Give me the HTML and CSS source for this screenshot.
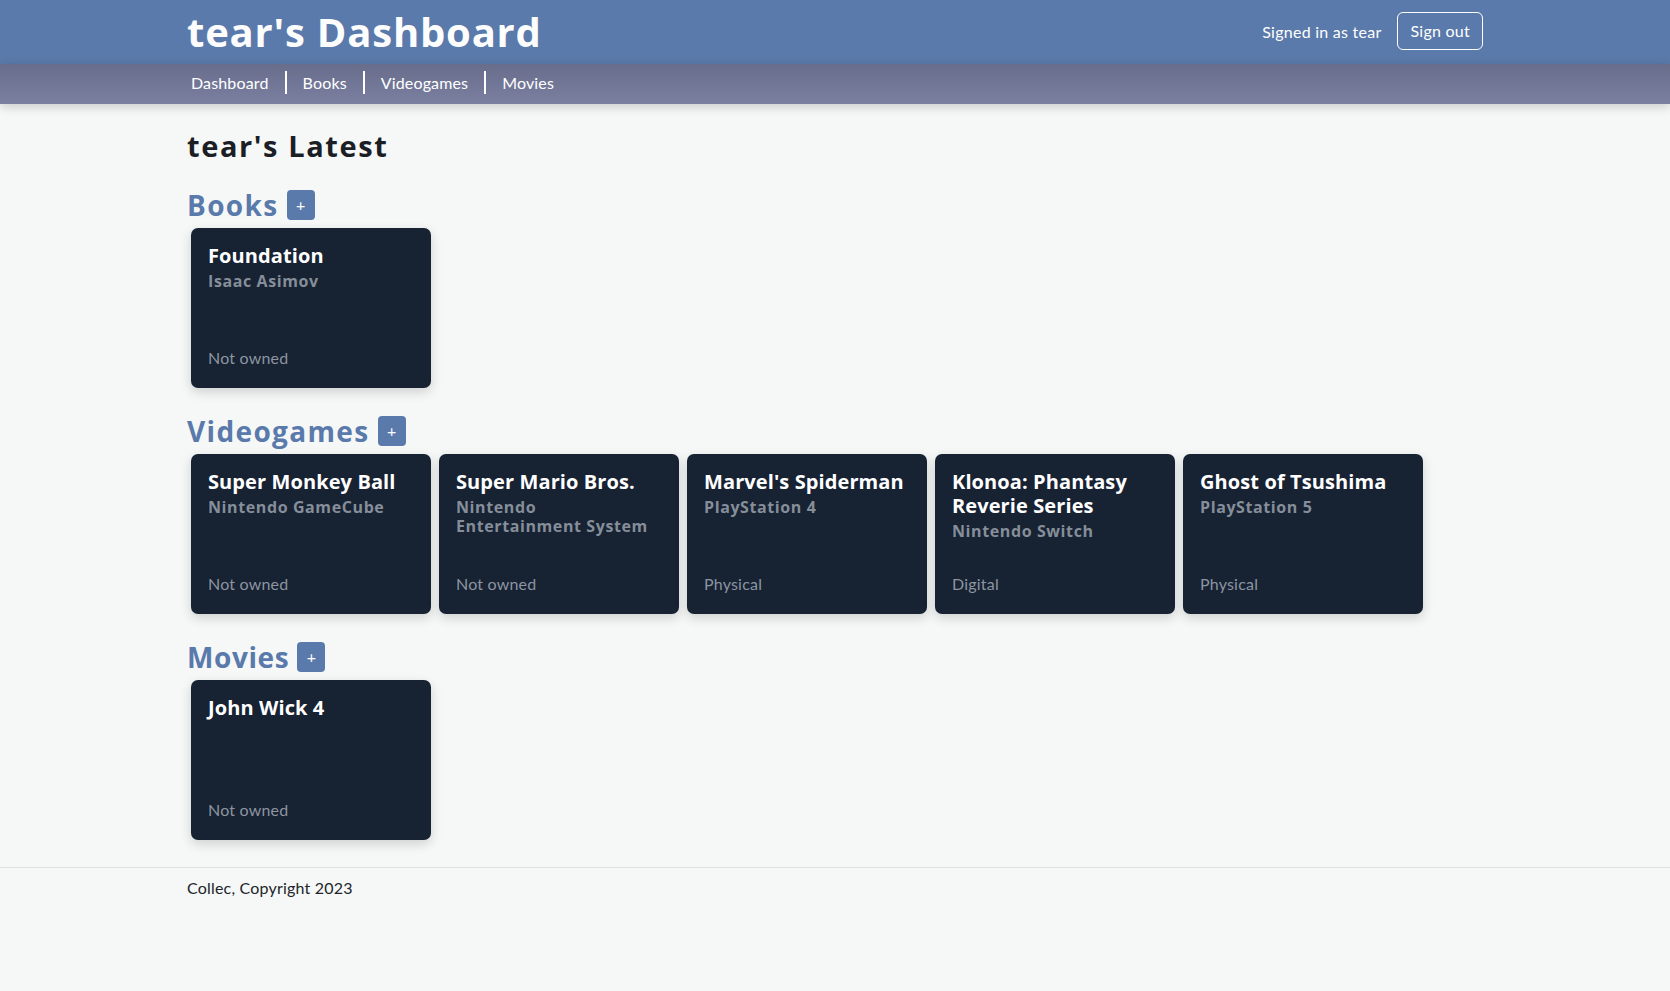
FILE: index.html
```html
<!DOCTYPE html>
<html lang="en">
<head>
<meta charset="utf-8">
<title>tear's Dashboard</title>
<link rel="stylesheet" href="styles.css">
</head>
<body>
<header class="topbar">
  <div class="container topbar-inner">
    <h1 class="brand">tear's Dashboard</h1>
    <div class="user">
      <span class="signed">Signed in as tear</span>
      <button class="signout">Sign out</button>
    </div>
  </div>
</header>
<nav class="navbar">
  <div class="container nav-inner">
    <a class="nav-link first" href="#">Dashboard</a>
    <a class="nav-link" href="#">Books</a>
    <a class="nav-link" href="#">Videogames</a>
    <a class="nav-link" href="#">Movies</a>
  </div>
</nav>
<main class="container main">
  <h2 class="latest">tear's Latest</h2>

  <section class="section first-section">
    <div class="section-head">
      <h3 class="section-title">Books</h3>
      <button class="add">+</button>
    </div>
    <div class="cards">
      <div class="card">
        <div class="card-title">Foundation</div>
        <div class="card-sub">Isaac Asimov</div>
        <div class="card-status">Not owned</div>
      </div>
    </div>
  </section>

  <section class="section">
    <div class="section-head">
      <h3 class="section-title">Videogames</h3>
      <button class="add">+</button>
    </div>
    <div class="cards">
      <div class="card">
        <div class="card-title">Super Monkey Ball</div>
        <div class="card-sub">Nintendo GameCube</div>
        <div class="card-status">Not owned</div>
      </div>
      <div class="card">
        <div class="card-title">Super Mario Bros.</div>
        <div class="card-sub">Nintendo<br>Entertainment System</div>
        <div class="card-status">Not owned</div>
      </div>
      <div class="card">
        <div class="card-title">Marvel's Spiderman</div>
        <div class="card-sub">PlayStation 4</div>
        <div class="card-status">Physical</div>
      </div>
      <div class="card">
        <div class="card-title">Klonoa: Phantasy<br>Reverie Series</div>
        <div class="card-sub">Nintendo Switch</div>
        <div class="card-status">Digital</div>
      </div>
      <div class="card">
        <div class="card-title">Ghost of Tsushima</div>
        <div class="card-sub">PlayStation 5</div>
        <div class="card-status">Physical</div>
      </div>
    </div>
  </section>

  <section class="section">
    <div class="section-head">
      <h3 class="section-title movies-title">Movies</h3>
      <button class="add">+</button>
    </div>
    <div class="cards">
      <div class="card">
        <div class="card-title">John Wick 4</div>
        <div class="card-status">Not owned</div>
      </div>
    </div>
  </section>
</main>
<footer class="footer">
  <div class="container">Collec, Copyright 2023</div>
</footer>
</body>
</html>
```

FILE: styles.css
```css
* { box-sizing: border-box; }

html, body {
  margin: 0;
  padding: 0;
}

body {
  background: #f6f8f8;
  font-family: "Lato", "Liberation Sans", sans-serif;
  font-size: 16px;
  color: #212529;
  min-height: 991px;
}

.container {
  max-width: 1320px;
  margin: 0 auto;
  padding: 0 12px;
}

.topbar {
  background: #5a7aab;
  height: 64px;
}

.topbar-inner {
  height: 64px;
  display: flex;
  align-items: center;
  justify-content: space-between;
}

.brand {
  margin: 0;
  font-family: "Open Sans", "DejaVu Sans", sans-serif;
  font-weight: 700;
  font-size: 40px;
  line-height: 48px;
  color: #fdfdfd;
  letter-spacing: 0.8px;
}

.user {
  display: flex;
  align-items: center;
  gap: 16px;
  color: #fff;
  padding-bottom: 2px;
}

.signed {
  letter-spacing: 0.25px;
}

.signout {
  font-family: "Lato", "Liberation Sans", sans-serif;
  font-size: 16px;
  line-height: 24px;
  letter-spacing: 0.25px;
  color: #fff;
  background: transparent;
  border: 1px solid #fff;
  border-radius: 6px;
  padding: 6px 12px;
}

.navbar {
  height: 40px;
  background: linear-gradient(#686d8c, #7b80a0);
  box-shadow: 0 3px 10px rgba(0, 0, 0, 0.18);
  position: relative;
}

.nav-inner {
  height: 40px;
  display: flex;
  align-items: center;
  padding-bottom: 3px;
}

.nav-link {
  color: #fff;
  text-decoration: none;
  padding: 0 16px;
  line-height: 23px;
  letter-spacing: 0.15px;
  border-left: 2px solid #fff;
}

.nav-link.first {
  border-left: none;
  padding-left: 4px;
}

.main {
  padding-top: 24px;
}

.latest {
  margin: 0;
  font-family: "Open Sans", "DejaVu Sans", sans-serif;
  font-weight: 700;
  font-size: 29px;
  line-height: 36px;
  letter-spacing: 1.6px;
  color: #1b1f25;
}

.section {
  margin-top: 22px;
}

.first-section {
  margin-top: 24px;
}

.section-head {
  display: flex;
  align-items: center;
  gap: 8px;
  height: 34px;
}

.section-title {
  margin: 0;
  font-family: "Open Sans", "DejaVu Sans", sans-serif;
  font-weight: 700;
  font-size: 28px;
  line-height: 34px;
  letter-spacing: 1.35px;
  color: #5a7aab;
}

.movies-title {
  letter-spacing: 0.6px;
}

.add {
  width: 28px;
  height: 30px;
  padding: 0;
  border: none;
  border-radius: 4px;
  background: #5a7aab;
  color: #fff;
  font-family: "Lato", sans-serif;
  font-size: 16px;
  line-height: 30px;
}

.cards {
  display: flex;
  flex-wrap: wrap;
  margin-top: 2px;
}

.card {
  width: 240px;
  height: 160px;
  margin: 4px;
  padding: 16px 16px 18px 17px;
  background: #172233;
  border-radius: 7px;
  box-shadow: 0 4px 12px rgba(0, 0, 0, 0.16);
  display: flex;
  flex-direction: column;
}

.card-title {
  font-family: "Open Sans", "DejaVu Sans", sans-serif;
  font-weight: 700;
  font-size: 20px;
  line-height: 24px;
  letter-spacing: 0.1px;
  color: #ffffff;
}

.card-sub {
  margin-top: 4px;
  font-family: "Open Sans", "DejaVu Sans", sans-serif;
  font-weight: 700;
  font-size: 16px;
  line-height: 19px;
  letter-spacing: 0.6px;
  color: #858e99;
}

.card-status {
  margin-top: auto;
  line-height: 24px;
  letter-spacing: 0.2px;
  color: #8c95a0;
}

.footer {
  margin-top: 23px;
  border-top: 1px solid #dde0e3;
  padding-top: 8px;
  line-height: 24px;
  letter-spacing: 0.2px;
}
```
